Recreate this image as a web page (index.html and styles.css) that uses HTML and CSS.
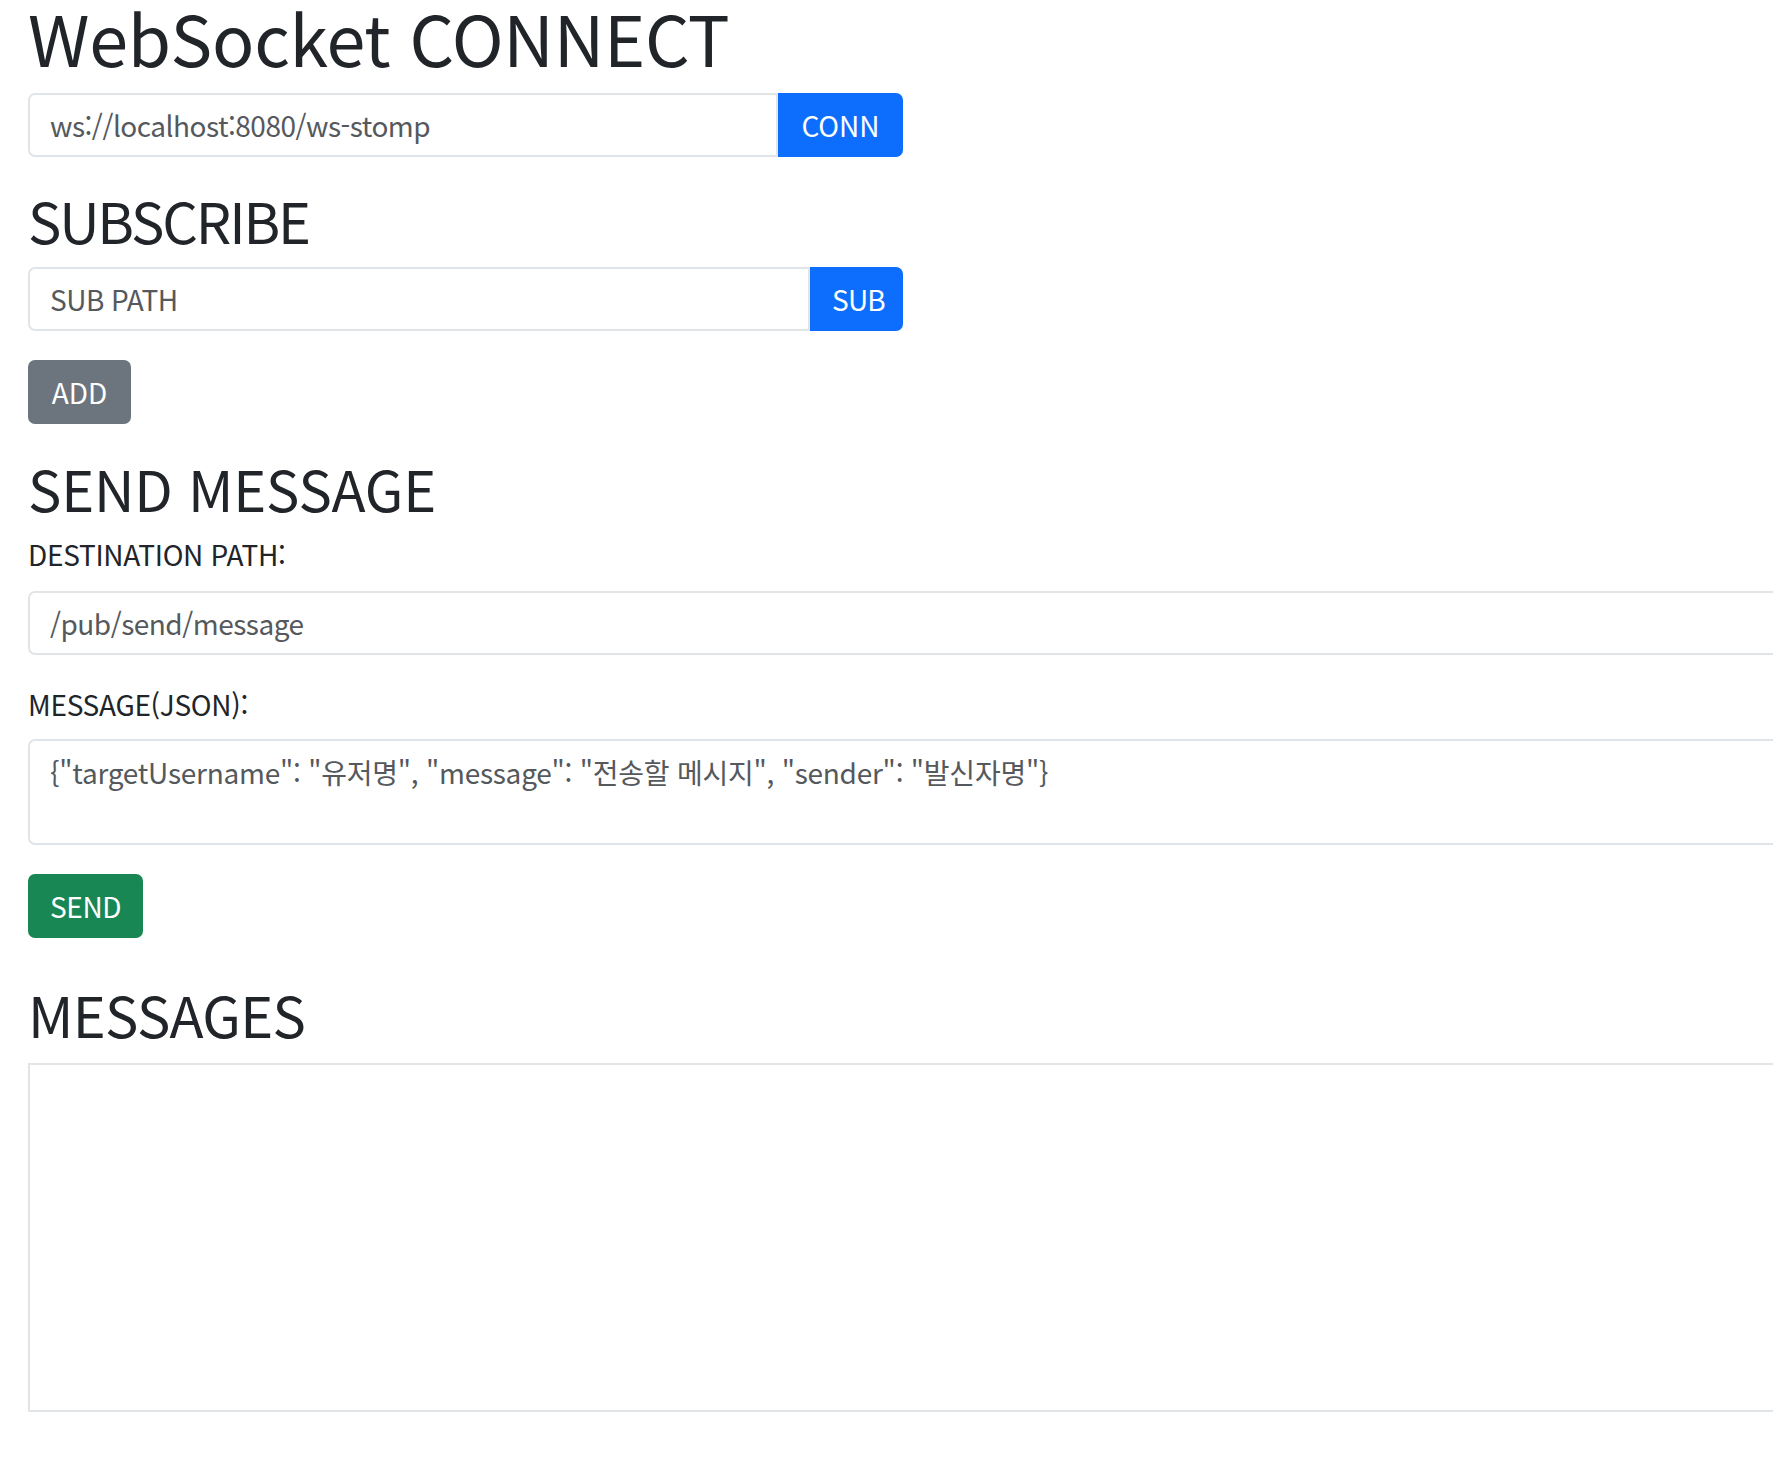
FILE: index.html
```html
<!DOCTYPE html>
<html lang="ko">
<head>
<meta charset="utf-8">
<title>WebSocket</title>
<link rel="stylesheet" href="styles.css">
</head>
<body>
<div class="page">
  <h1 class="title">WebSocket CONNECT</h1>
  <div class="input-group group-conn">
    <input class="field field-grouped" type="text" value="ws://localhost:8080/ws-stomp">
    <button class="btn btn-primary" type="button">CONN</button>
  </div>

  <h2 class="section section-sub">SUBSCRIBE</h2>
  <div class="input-group group-sub">
    <input class="field field-grouped" type="text" placeholder="SUB PATH">
    <button class="btn btn-primary btn-sub" type="button">SUB</button>
  </div>
  <div class="add-row">
    <button class="btn btn-secondary" type="button">ADD</button>
  </div>

  <h2 class="section section-send">SEND MESSAGE</h2>
  <label class="label label-dest">DESTINATION PATH:</label>
  <input class="field wide" type="text" value="/pub/send/message">
  <label class="label label-msg">MESSAGE(JSON):</label>
  <textarea class="field wide area" placeholder='{"targetUsername": "유저명", "message": "전송할 메시지", "sender": "발신자명"}'></textarea>
  <div class="send-row">
    <button class="btn btn-success" type="button">SEND</button>
  </div>

  <h2 class="section section-msgs">MESSAGES</h2>
  <div class="messages wide"></div>
</div>
</body>
</html>
```
FILE: styles.css
```css
html, body {
  margin: 0;
  padding: 0;
  background: #fff;
  overflow: hidden;
}

body {
  font-family: "Noto Sans CJK KR", "Noto Sans", sans-serif;
  color: #212529;
  font-size: 28px;
}

.page {
  padding: 2px 0 0 28px;
}

.title {
  margin: 0;
  font-size: 70px;
  font-weight: 400;
  line-height: 70px;
  letter-spacing: -0.3px;
  color: #212529;
}

.section {
  margin: 0;
  font-size: 56px;
  font-weight: 400;
  line-height: 56px;
  color: #212529;
}

.section-sub { margin-top: 35px; letter-spacing: -2.2px; }
.section-send { margin-top: 36px; letter-spacing: -0.2px; }
.section-msgs { margin-top: 48px; letter-spacing: -0.7px; }

.input-group {
  display: flex;
  width: 875px;
  height: 64px;
}

.group-conn { margin-top: 21px; }
.group-sub { margin-top: 19px; }

.field {
  box-sizing: border-box;
  font-family: inherit;
  font-size: 28px;
  letter-spacing: -0.5px;
  color: #55595d;
  background: #fff;
  border: 2px solid #e2e5e8;
  border-radius: 7px;
  padding: 0 20px;
  height: 64px;
  line-height: 42px;
  outline: none;
  display: block;
}

.field::placeholder {
  color: #55595d;
  opacity: 1;
}

.field-grouped {
  flex: 1;
  min-width: 0;
  border-top-right-radius: 0;
  border-bottom-right-radius: 0;
}

.wide {
  width: 1800px;
}

.area {
  height: 106px;
  padding: 10px 20px;
  resize: none;
  margin-top: 24px;
  letter-spacing: -0.25px;
}

.btn {
  box-sizing: border-box;
  font-family: inherit;
  font-size: 28px;
  line-height: 42px;
  height: 64px;
  padding: 0 20px;
  border: 2px solid transparent;
  border-radius: 7px;
  color: #fff;
  cursor: pointer;
}

.input-group .btn {
  border-top-left-radius: 0;
  border-bottom-left-radius: 0;
  width: 125px;
}

.input-group .btn-sub {
  width: 93px;
  letter-spacing: -0.8px;
}

.btn-primary { background: #0d6efd; border-color: #0d6efd; }
.btn-secondary { background: #6c757d; border-color: #6c757d; width: 103px; }
.btn-success { background: #198754; border-color: #198754; width: 115px; letter-spacing: -0.4px; }

.add-row { margin-top: 29px; }
.send-row { margin-top: 29px; }

.label {
  display: block;
  font-size: 28px;
  line-height: 28px;
  letter-spacing: -0.3px;
  color: #212529;
}

.label-dest { margin-top: 24px; margin-bottom: 23px; }
.label-msg { margin-top: 35px; margin-bottom: -3px; }

.messages {
  box-sizing: border-box;
  margin-top: 21px;
  height: 349px;
  border: 2px solid #e2e5e8;
  border-right: none;
}
```
